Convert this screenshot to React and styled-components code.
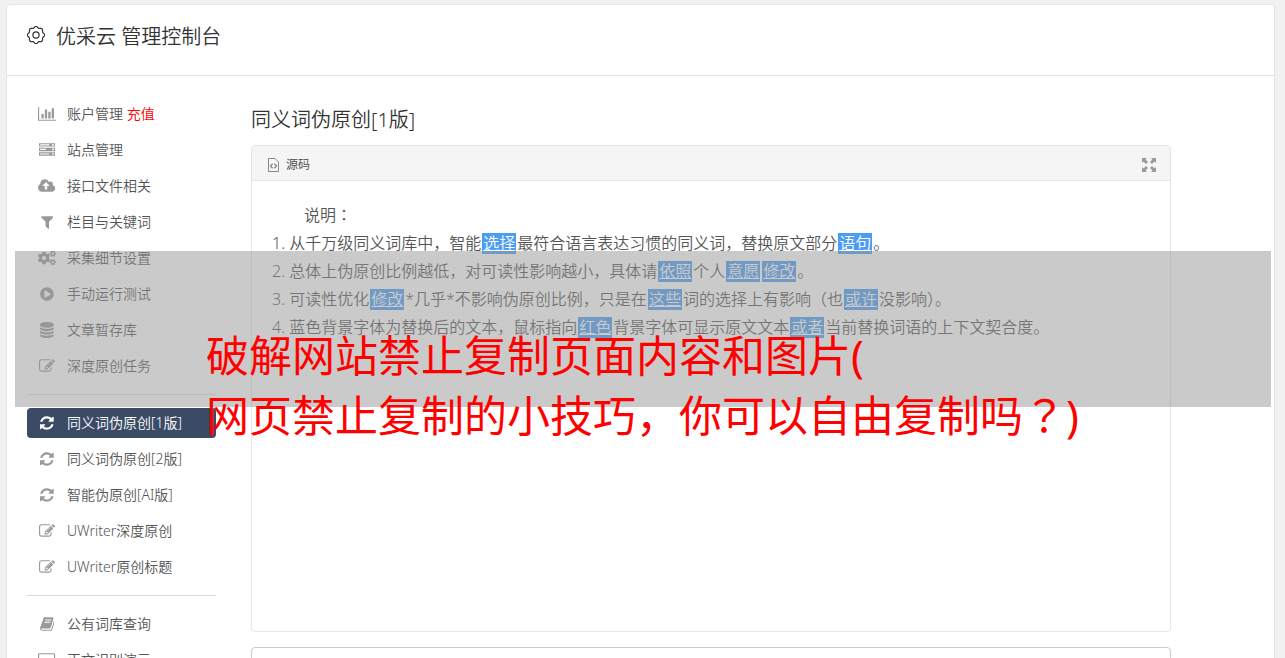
import React from 'react';
import styled, { createGlobalStyle } from 'styled-components';
import { FaCogs, FaPlayCircle } from 'react-icons/fa';

const PATHS = {
  chart: {
    box: '0 0 2048 1792',
    d: 'M640 896v512h-256v-512h256zm384-512v1024h-256v-1024h256zm1024 1152v128h-2048v-1536h128v1408h1920zm-640-896v768h-256v-768h256zm384-384v1152h-256v-1152h256z',
  },
  server: {
    box: '0 0 1792 1792',
    d: 'M0 128h1792v384h-1792zM128 256v128h1024v-128zM1472 224v192h192v-192zM0 640h1792v384h-1792zM128 768v128h640v-128zM1472 736v192h192v-192zM0 1152h1792v384h-1792zM128 1280v128h1024v-128zM1472 1248v192h192v-192z',
  },
  cloud: {
    box: '0 0 1920 1792',
    d: 'M1280 864q0-14-9-23l-352-352q-9-9-23-9t-23 9l-351 351q-10 12-10 24 0 14 9 23t23 9h224v352q0 13 9.5 22.5t22.5 9.5h192q13 0 22.5-9.5t9.5-22.5v-352h224q13 0 22.5-9.5t9.5-22.5zm640 288q0 159-112.5 271.5t-271.5 112.5h-1088q-185 0-316.5-131.5t-131.5-316.5q0-130 70-240t188-165q-2-30-2-43 0-212 150-362t362-150q156 0 285.5 87t188.5 231q71-62 166-62 106 0 181 75t75 181q0 76-41 138 130 31 213.5 135.5t83.5 237.5z',
  },
  filter: {
    box: '0 0 1408 1792',
    d: 'M1403 295q17 41-14 70l-493 493v742q0 42-39 59-13 5-25 5-27 0-45-19l-256-256q-19-19-19-45v-486l-493-493q-31-29-14-70 17-39 59-39h1280q42 0 59 39z',
  },
  database: {
    box: '0 0 1536 1792',
    d: 'M768 768q237 0 443-43t325-127v170q0 69-103 128t-280 93.5-385 34.5-385-34.5-280-93.5-103-128v-170q119 84 325 127t443 43zm0 768q237 0 443-43t325-127v170q0 69-103 128t-280 93.5-385 34.5-385-34.5-280-93.5-103-128v-170q119 84 325 127t443 43zm0-384q237 0 443-43t325-127v170q0 69-103 128t-280 93.5-385 34.5-385-34.5-280-93.5-103-128v-170q119 84 325 127t443 43zm0-1152q208 0 385 34.5t280 93.5 103 128v128q0 69-103 128t-280 93.5-385 34.5-385-34.5-280-93.5-103-128v-128q0-69 103-128t280-93.5 385-34.5z',
  },
  edit: {
    box: '0 0 1792 1792',
    d: 'M888 1184l116-116-152-152-116 116v56h96v96h56zm440-720q-16-16-33 1l-350 350q-17 17-1 33t33-1l350-350q17-17 1-33zm80 594v190q0 119-84.5 203.5t-203.5 84.5h-832q-119 0-203.5-84.5t-84.5-203.5v-832q0-119 84.5-203.5t203.5-84.5h832q63 0 117 25 15 7 18 23 3 17-9 29l-49 49q-14 14-32 8-23-6-45-6h-832q-66 0-113 47t-47 113v832q0 66 47 113t113 47h832q66 0 113-47t47-113v-126q0-13 9-22l64-64q15-15 35-7t20 29zm-96-738l288 288-672 672h-288v-288zm444 132l-92 92-288-288 92-92q28-28 68-28t68 28l152 152q28 28 28 68t-28 68z',
  },
  refresh: {
    box: '0 0 1536 1792',
    d: 'M1511 1056q0 5-1 7-64 268-268 434.5t-478 166.5q-146 0-282.5-55t-243.5-157l-129 129q-19 19-45 19t-45-19-19-45v-448q0-26 19-45t45-19h448q26 0 45 19t19 45-19 45l-137 137q71 66 161 102t187 36q134 0 250-65t186-179q11-17 53-117 8-23 30-23h192q13 0 22.5 9.5t9.5 22.5zm25-800v448q0 26-19 45t-45 19h-448q-26 0-45-19t-19-45 19-45l138-138q-148-137-349-137-134 0-250 65t-186 179q-11 17-53 117-8 23-30 23h-199q-13 0-22.5-9.5t-9.5-22.5v-7q65-268 270-434.5t480-166.5q146 0 284 55.5t245 156.5l130-129q19-19 45-19t45 19 19 45z',
  },
  book: {
    box: '0 0 1664 1792',
    d: 'M1639 478q40 57 18 129l-275 906q-19 64-76.5 107.5t-122.5 43.5h-923q-77 0-148.5-53.5t-99.5-131.5q-24-67-2-127 0-4 3-27t4-37q1-8-3-21.5t-3-19.5q2-11 8-21t16.5-23.5 16.5-23.5q23-38 45-91.5t30-91.5q3-10 .5-30t-.5-28q3-11 17-28t17-23q21-36 42-92t25-90q1-9-2.5-32t.5-28q4-13 22-30.5t22-22.5q19-26 42.5-84.5t27.5-96.5q1-8-3-25.5t-2-26.5q2-8 9-18t18-23 17-21q8-12 16.5-30.5t15-35 16-36 19.5-32 26.5-23.5 36-11.5 47.5 5.5l-1 3q38-9 51-9h761q74 0 114 56t18 130l-274 906q-36 119-71.5 153.5t-128.5 34.5h-869q-27 0-38 15-11 16-1 43 24 70 144 70h923q29 0 56-15.5t35-41.5l300-987q7-22 5-57 38 15 59 43zm-1064 2q-4 13 2 22.5t20 9.5h608q13 0 25.5-9.5t16.5-22.5l21-64q4-13-2-22.5t-20-9.5h-608q-13 0-25.5 9.5t-16.5 22.5zm-83 256q-4 13 2 22.5t20 9.5h608q13 0 25.5-9.5t16.5-22.5l21-64q4-13-2-22.5t-20-9.5h-608q-13 0-25.5 9.5t-16.5 22.5z',
  },
  desktop: {
    box: '0 0 1920 1792',
    d: 'M160 128h1600q160 0 160 160v1088q0 160-160 160h-544v128h128v128h-768v-128h128v-128h-544q-160 0-160-160v-1088q0-160 160-160zM128 288v832h1664v-832q0-32-32-32h-1600q-32 0-32 32z',
  },
};

const Glyph = ({ name }) => (
  <svg viewBox={PATHS[name].box} height="16" fill="currentColor" fillRule="evenodd" aria-hidden="true">
    <path d={PATHS[name].d} />
  </svg>
);

// outline of the scalloped gear, eight rounded teeth
const gearOutline = Array.from({ length: 96 }, (_, i) => {
  const a = (i / 96) * Math.PI * 2;
  const r = 7.9 + 0.7 * Math.cos(8 * a);
  return `${(9 + r * Math.cos(a)).toFixed(2)} ${(9 + r * Math.sin(a)).toFixed(2)}`;
}).join('L');

const GearIcon = () => (
  <svg width="18" height="18" viewBox="0 0 18 18" fill="none" stroke="currentColor" strokeWidth="1.2" aria-hidden="true">
    <path d={`M${gearOutline}Z`} />
    <circle cx="9" cy="9" r="3.1" />
  </svg>
);

const SourceIcon = () => (
  <svg width="11" height="14" viewBox="0 0 11 14" fill="none" stroke="#888" aria-hidden="true">
    <path d="M.5.5H7L10.500 4V13.500H.5Z" />
    <path d="M4.600 5.700L2.500 8L4.600 10.300M6.400 5.700L8.500 8L6.400 10.300" strokeWidth="1.300" />
  </svg>
);

const ExpandIcon = () => (
  <svg width="14" height="14" viewBox="0 0 14 14" fill="currentColor" aria-hidden="true">
    <path d="M0 0H5L3.500 1.500L6 4L4 6L1.500 3.500L0 5Z" />
    <path d="M14 0V5L12.500 3.500L10 6L8 4L10.500 1.500L9 0Z" />
    <path d="M14 14H9L10.500 12.500L8 10L10 8L12.500 10.500L14 9Z" />
    <path d="M0 14V9L1.500 10.500L4 8L6 10L3.500 12.500L5 14Z" />
  </svg>
);

const menu = [
  [
    { icon: <Glyph name="chart" />, label: '账户管理', extra: '充值' },
    { icon: <Glyph name="server" />, label: '站点管理' },
    { icon: <Glyph name="cloud" />, label: '接口文件相关' },
    { icon: <Glyph name="filter" />, label: '栏目与关键词' },
    { icon: <FaCogs size={18} />, label: '采集细节设置' },
    { icon: <FaPlayCircle size={14} />, label: '手动运行测试' },
    { icon: <Glyph name="database" />, label: '文章暂存库' },
    { icon: <Glyph name="edit" />, label: '深度原创任务' },
  ],
  [
    { icon: <Glyph name="refresh" />, label: '同义词伪原创[1版]', active: true },
    { icon: <Glyph name="refresh" />, label: '同义词伪原创[2版]' },
    { icon: <Glyph name="refresh" />, label: '智能伪原创[AI版]' },
    { icon: <Glyph name="edit" />, label: 'UWriter深度原创' },
    { icon: <Glyph name="edit" />, label: 'UWriter原创标题' },
  ],
  [
    { icon: <Glyph name="book" />, label: '公有词库查询' },
    { icon: <Glyph name="desktop" />, label: '正文识别演示' },
  ],
];

const App = () => (
  <>
    <GlobalStyle />
    <Card>
      <Header>
        <GearIcon />
        <Brand>优采云 管理控制台</Brand>
      </Header>
      <Body>
        <Sidebar>
          {menu.map((group) => (
            <MenuGroup key={group[0].label}>
              {group.map((item) => (
                <li key={item.label}>
                  <MenuLink href="#" $active={item.active}>
                    <IconSlot>{item.icon}</IconSlot>
                    <span>
                      {item.label}
                      {item.extra && <Recharge> {item.extra}</Recharge>}
                    </span>
                  </MenuLink>
                </li>
              ))}
            </MenuGroup>
          ))}
        </Sidebar>
        <Main>
          <Title>同义词伪原创[1版]</Title>
          <Editor>
            <Toolbar>
              <SourceButton type="button">
                <SourceIcon />
                源码
              </SourceButton>
              <ExpandButton type="button" aria-label="全屏">
                <ExpandIcon />
              </ExpandButton>
            </Toolbar>
            <Content>
              <Intro>说明<Mark>：</Mark></Intro>
              <Notes>
                <li>
                  从千万级同义词库中，智能<Word href="#">选择</Word>
                  最符合语言表达习惯的同义词，替换原文部分<Word href="#">语句</Word>。
                </li>
                <li>
                  总体上伪原创比例越低，对可读性影响越小，具体请<Word href="#">依照</Word>
                  个人<Word href="#">意愿</Word><Word href="#">修改</Word>。
                </li>
                <li>
                  可读性优化<Word href="#">修改</Word>
                  *几乎*不影响伪原创比例，只是在<Word href="#">这些</Word>
                  词的选择上有影响（也<Word href="#">或许</Word>没影响）。
                </li>
                <li>
                  蓝色背景字体为替换后的文本，鼠标指向<Word href="#">红色</Word>
                  背景字体可显示原文文本<Word href="#">或者</Word>当前替换词语的上下文契合度。
                </li>
              </Notes>
            </Content>
          </Editor>
          <SourceText aria-label="原文" />
        </Main>
      </Body>
    </Card>
    <Banner>
      破解网站禁止复制页面内容和图片(
      <br />
      网页禁止复制的小技巧，你可以自由复制吗<Mark>？</Mark>)
    </Banner>
  </>
);

export default App;

const GlobalStyle = createGlobalStyle`
  * {
    box-sizing: border-box;
  }
  body {
    margin: 0;
    background: #f1f1f1;
    color: #555;
    font-family: 'Noto Sans', 'Noto Sans CJK SC', sans-serif;
    font-weight: 350;
  }
  ul, ol, p, h1, h2 {
    margin: 0;
    padding: 0;
  }
  button {
    padding: 0;
    border: 0;
    background: none;
    font: inherit;
    color: inherit;
  }
`;

// colon and question mark set in the middle of their cell
const Mark = styled.span`
  font-family: 'Noto Sans CJK TC', sans-serif;
  line-height: 1;
`;

const Card = styled.div`
  margin: 4px 10px 0 6px;
  border: 1px solid #e5e5e5;
  border-radius: 4px;
  background: #fff;
`;

const Header = styled.header`
  display: flex;
  align-items: center;
  gap: 11px;
  height: 71px;
  padding: 0 20px 10px;
  border-bottom: 1px solid #e2e2e2;
  color: #333;
`;

const Brand = styled.h1`
  padding-top: 3px;
  font-size: 20px;
  line-height: 28px;
  font-weight: 350;
`;

const Body = styled.div`
  display: flex;
  gap: 35px;
  padding: 23px 103px 24px 20px;
`;

const Sidebar = styled.nav`
  flex: 0 0 189px;
`;

const MenuGroup = styled.ul`
  display: flex;
  flex-direction: column;
  gap: 6px;
  list-style: none;
  & + & {
    margin-top: 13px;
    padding-top: 13px;
    border-top: 1px solid #ddd;
  }
`;

const MenuLink = styled.a`
  display: flex;
  align-items: center;
  gap: 10px;
  height: 30px;
  padding: 0 10px;
  border-radius: 4px;
  font-size: 14px;
  line-height: 20px;
  text-decoration: none;
  color: ${({ $active }) => ($active ? '#fff' : '#555')};
  background: ${({ $active }) => ($active ? '#3b4b66' : 'transparent')};
  svg {
    color: ${({ $active }) => ($active ? '#fff' : '#999')};
  }
`;

const IconSlot = styled.span`
  display: flex;
  justify-content: center;
  width: 20px;
`;

const Recharge = styled.span`
  color: #f00;
`;

const Main = styled.main`
  flex: 1;
  min-width: 0;
`;

const Title = styled.h2`
  margin: 6px 0 11px;
  font-size: 20px;
  line-height: 29px;
  font-weight: 350;
  color: #333;
`;

const Editor = styled.section`
  border: 1px solid #e5e5e5;
  border-radius: 4px;
`;

const Toolbar = styled.div`
  display: flex;
  align-items: center;
  justify-content: space-between;
  height: 35px;
  padding: 3px 14px 0 16px;
  border-bottom: 1px solid #e5e5e5;
  border-radius: 4px 4px 0 0;
  background: #f5f5f5;
`;

const SourceButton = styled.button`
  display: flex;
  align-items: center;
  gap: 7px;
  font-size: 12px;
  line-height: 20px;
  color: #444;
`;

const ExpandButton = styled.button`
  display: flex;
  color: #999;
`;

const Content = styled.div`
  height: 450px;
  padding: 20px;
  font-size: 16px;
  line-height: 28px;
`;

const Intro = styled.p`
  text-indent: 2em;
`;

const Notes = styled.ol`
  list-style-position: inside;
`;

const Word = styled.a`
  display: inline-block;
  margin: 0 1px;
  padding: 0 1px;
  line-height: 21px;
  background: #4a9df3;
  color: #fff;
  text-decoration: underline;
`;

const SourceText = styled.textarea`
  display: block;
  width: 100%;
  height: 120px;
  margin-top: 15px;
  border: 1px solid #ccc;
  border-radius: 4px;
  resize: none;
`;

// translucent strip laid over the page, the caption runs out below it
const Banner = styled.div`
  position: absolute;
  top: 251px;
  left: 15px;
  right: 14px;
  height: 156px;
  padding: 75px 0 0 191px;
  background: rgba(150, 150, 150, 0.5);
  color: #f00;
  font-size: 43px;
  line-height: 60px;
  font-weight: 400;
`;
